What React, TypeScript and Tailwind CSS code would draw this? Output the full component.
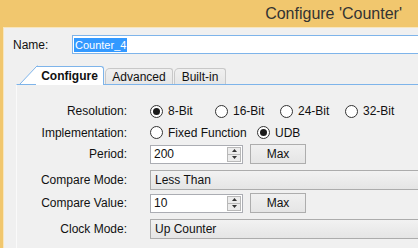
import React from "react";

function Radio({ checked, label, w }: { checked?: boolean; label: string; w: string }) {
  return (
    <div className={`flex items-center gap-[5px] ${w}`}>
      <span className="w-[13px] h-[13px] rounded-full border border-[#333] bg-white flex items-center justify-center shrink-0">
        {checked && <span className="w-[7px] h-[7px] rounded-full bg-[#1a1a1a]" />}
      </span>
      <span>{label}</span>
    </div>
  );
}

function Spin({ value }: { value: string }) {
  return (
    <div className="flex items-center">
      <div className="w-[93px] h-[19px] border border-[#abadb3] bg-white flex items-center">
        <span className="flex-1 pl-[3px] leading-none">{value}</span>
        <div className="w-[14px] h-[15px] mr-[1px] border border-[#b8b8b8] bg-[#ececec] flex flex-col">
          <div className="flex-1 flex items-center justify-center border-b border-[#b8b8b8]">
            <svg width="5" height="3" viewBox="0 0 5 3"><path d="M0 3 L2.5 0 L5 3 Z" fill="#333" /></svg>
          </div>
          <div className="flex-1 flex items-center justify-center">
            <svg width="5" height="3" viewBox="0 0 5 3"><path d="M0 0 L2.5 3 L5 0 Z" fill="#333" /></svg>
          </div>
        </div>
      </div>
      <div className="ml-[7px] w-[56px] h-[20px] border border-[#adadad] bg-gradient-to-b from-[#f0f0f0] to-[#e5e5e5] flex items-center justify-center">
        Max
      </div>
    </div>
  );
}

function Drop({ value }: { value: string }) {
  return (
    <div className="flex-1 h-[20px] border border-r-0 border-[#acacac] bg-gradient-to-b from-[#f2f2f2] to-[#e5e5e5] flex items-center pl-[4px]">
      {value}
    </div>
  );
}

function Row({ label, h, mt, children }: { label: string; h: string; mt?: string; children: React.ReactNode }) {
  return (
    <div className={`flex items-center ${h} ${mt ?? ""}`}>
      <div className="w-[110px] text-right">{label}</div>
      <div className="ml-[23px] flex-1 flex items-center">{children}</div>
    </div>
  );
}

export default function App() {
  return (
    <div className="w-[418px] h-[248px] overflow-hidden bg-[#f1c76e] flex flex-col font-['Liberation_Sans',sans-serif] text-[12px] text-[#111]">
      <div className="h-[27px] shrink-0 flex items-center justify-end pr-[16px] text-[16px] text-[#333]">
        Configure 'Counter'
      </div>
      <div className="flex-1 ml-[3px] bg-[#f0f0f0] border-l border-t border-[#f8e6bd] flex flex-col">
        <div className="flex items-center pt-[7px] pl-[9px]">
          <div className="w-[59px]">Name:</div>
          <div className="flex-1 h-[19px] border border-r-0 border-[#7eb4ea] bg-white flex items-center pl-[1px]">
            <span className="bg-[#3399ff] text-white px-[1px] text-[11px] leading-[14px]">Counter_4</span>
          </div>
        </div>
        <div className="mt-[11px] pl-[14px] flex items-end h-[19px]">
          <svg width="20" height="19" viewBox="0 0 20 19" className="shrink-0 -mr-px">
            <path d="M2 19 L18 2 Q19 1 20 1 L20 19 Z" fill="#ffffff" />
            <path d="M2 19 L18 2 Q19 1 20 1" fill="none" stroke="#7eb4ea" strokeWidth="1" />
          </svg>
          <div className="h-[19px] w-[68px] bg-white border-t border-r border-[#7eb4ea] rounded-tr-[3px] flex items-center justify-center font-bold text-[12px] -ml-[1px] relative top-[1px]">
            Configure
          </div>
          <div className="h-[16px] w-[68px] ml-[1px] bg-gradient-to-b from-[#f0f0f0] to-[#e6e6e6] border border-b-0 border-[#c8c8c8] rounded-tl-[5px] rounded-tr-[3px] flex items-center justify-center">
            Advanced
          </div>
          <div className="h-[16px] w-[52px] ml-[1px] bg-gradient-to-b from-[#f0f0f0] to-[#e6e6e6] border border-b-0 border-[#c8c8c8] rounded-tl-[5px] rounded-tr-[3px] flex items-center justify-center">
            Built-in
          </div>
        </div>
        <div className="flex-1 ml-[12px] border-t border-l border-t-[#7eb4ea] border-l-[#fafafa] bg-[#f0f0f0] pt-[15px] flex flex-col">
          <Row label="Resolution:" h="h-[22px]">
            <Radio checked label="8-Bit" w="w-[65px]" />
            <Radio label="16-Bit" w="w-[65px]" />
            <Radio label="24-Bit" w="w-[65px]" />
            <Radio label="32-Bit" w="w-[65px]" />
          </Row>
          <Row label="Implementation:" h="h-[21px]">
            <Radio label="Fixed Function" w="w-[107px]" />
            <Radio checked label="UDB" w="w-[60px]" />
          </Row>
          <Row label="Period:" h="h-[22px]">
            <Spin value="200" />
          </Row>
          <Row label="Compare Mode:" h="h-[24px]" mt="mt-[3px]">
            <Drop value="Less Than" />
          </Row>
          <Row label="Compare Value:" h="h-[22px]">
            <Spin value="10" />
          </Row>
          <Row label="Clock Mode:" h="h-[24px]" mt="mt-[3px]">
            <Drop value="Up Counter" />
          </Row>
        </div>
      </div>
    </div>
  );
}
